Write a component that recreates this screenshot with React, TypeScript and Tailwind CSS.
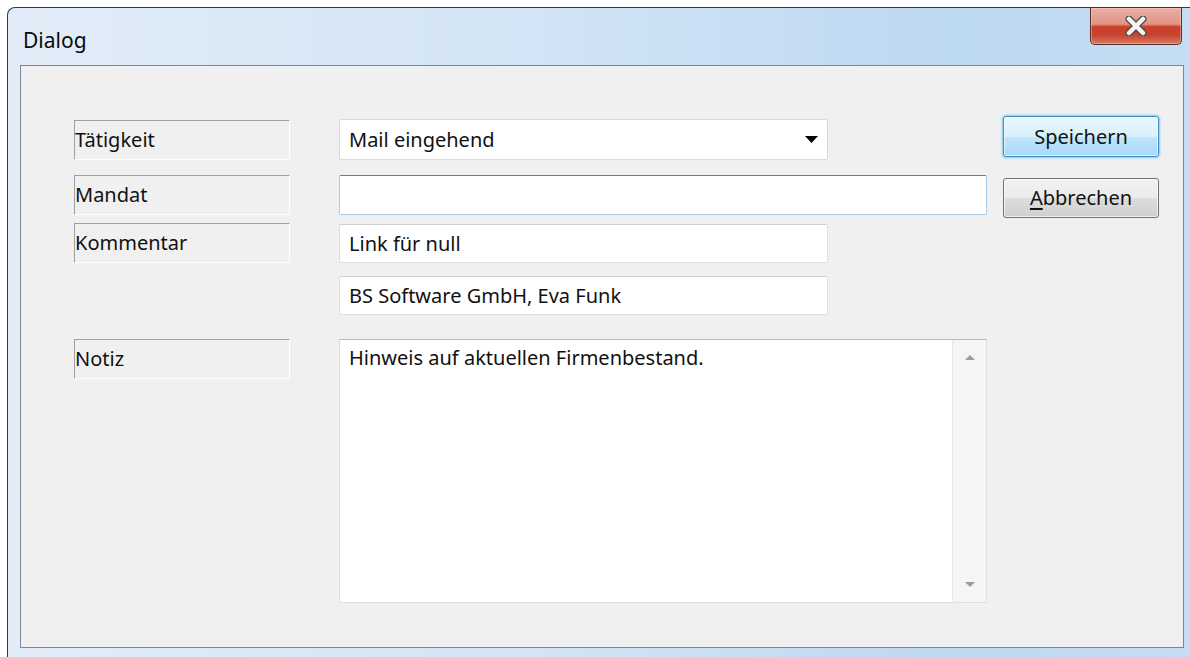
import { useState } from "react";

// Win7-style "Dialog" window: Aero frame, sunken labels, fields and two buttons

const FONT = { fontFamily: '"Noto Sans", "Open Sans", sans-serif' };

function FieldLabel({ text }: { text: string }) {
  return (
    <div className="flex h-[40px] w-[216px] shrink-0 items-center border-t border-l border-t-[#a0a0a0] border-l-[#a0a0a0] border-b border-r border-b-white border-r-white text-[20px] text-[#111]">
      {text}
    </div>
  );
}

function TextField({
  value,
  onChange,
  focused = false,
  width,
  height = "h-[39px]",
}: {
  value: string;
  onChange: (v: string) => void;
  focused?: boolean;
  width: string;
  height?: string;
}) {
  return (
    <input
      type="text"
      value={value}
      onChange={(e) => onChange(e.target.value)}
      style={FONT}
      className={`${width} ${height} rounded-[2px] border bg-white px-[9px] text-[20px] text-[#111] outline-none ${
        focused
          ? "border-[#a9cbe6] border-t-[#4a87bf]"
          : "border-[#dedede] border-t-[#d0d0d0]"
      }`}
    />
  );
}

function CloseButton() {
  return (
    <button className="flex h-[37px] w-[92px] items-center justify-center rounded-b-[5px] border border-t-0 border-[#5b2c28] bg-[linear-gradient(to_bottom,#ebb0a6_0%,#e19383_45%,#cb3f2a_52%,#c6432e_75%,#d77a66_100%)] shadow-[inset_0_0_0_1px_rgba(255,210,200,0.45)]">
      <svg width="30" height="20" viewBox="0 0 30 20">
        <path d="M8 3 L22 17 M22 3 L8 17" stroke="#4b4b4b" strokeWidth="7" strokeLinecap="round" />
        <path d="M8 3 L22 17 M22 3 L8 17" stroke="#f4f4f4" strokeWidth="4.5" strokeLinecap="round" />
      </svg>
    </button>
  );
}

function ScrollArrow({ up }: { up: boolean }) {
  return (
    <svg width="12" height="7" viewBox="0 0 12 7">
      <path d={up ? "M1 6 L6 1 L11 6 Z" : "M1 1 L6 6 L11 1 Z"} fill="#9c9c9c" />
    </svg>
  );
}

export default function App() {
  const [mandat, setMandat] = useState("");
  const [kommentar, setKommentar] = useState("Link für null");
  const [kontakt, setKontakt] = useState("BS Software GmbH, Eva Funk");
  const [notiz, setNotiz] = useState("Hinweis auf aktuellen Firmenbestand.");

  return (
    <div className="h-[657px] w-[1190px] overflow-hidden bg-white pl-[7px] pt-[7px]" style={FONT}>
      <div className="h-[660px] w-[1190px] rounded-tl-[8px] border-t border-l border-[#2f3b48] bg-[linear-gradient(to_right,#e2edf8_0%,#d2e4f5_45%,#bdd8f1_80%,#c6def3_100%)]">
        {/* Title bar */}
        <div className="flex h-[57px] items-start pl-[15px] pr-[15px]">
          <span className="mt-[19px] text-[21px] leading-[26px] text-[#0a0a0a]">Dialog</span>
          <div className="ml-auto">
            <CloseButton />
          </div>
        </div>

        {/* Client area */}
        <div className="ml-[12px] h-[583px] w-[1164px] border border-[#7b8794] bg-[#f0f0f0] pl-[53px] pt-[50px]">
          <div className="flex">
            {/* Fields */}
            <div className="mt-[3px] flex w-[913px] flex-col">
              <div className="flex items-center gap-[49px]">
                <FieldLabel text="Tätigkeit" />
                <div className="flex h-[41px] w-[489px] items-center justify-between rounded-[2px] border border-[#dadada] bg-white pl-[9px] pr-[9px] text-[20px] text-[#111]">
                  <span>Mail eingehend</span>
                  <svg width="13" height="7" viewBox="0 0 13 7">
                    <path d="M0 0 H13 L6.5 7 Z" fill="#000" />
                  </svg>
                </div>
              </div>

              <div className="mt-[15px] flex items-center gap-[49px]">
                <FieldLabel text="Mandat" />
                <TextField value={mandat} onChange={setMandat} focused width="w-[648px]" height="h-[40px]" />
              </div>

              <div className="mt-[8px] flex items-center gap-[49px]">
                <FieldLabel text="Kommentar" />
                <TextField value={kommentar} onChange={setKommentar} width="w-[489px]" />
              </div>

              <div className="mt-[13px] flex items-center gap-[49px]">
                <div className="w-[216px] shrink-0" />
                <TextField value={kontakt} onChange={setKontakt} width="w-[489px]" />
              </div>

              <div className="mt-[24px] flex items-start gap-[49px]">
                <FieldLabel text="Notiz" />
                <div className="flex h-[264px] w-[648px] border border-[#e0e0e0] border-t-[#b9b9b9] bg-white">
                  <textarea
                    value={notiz}
                    onChange={(e) => setNotiz(e.target.value)}
                    style={FONT}
                    className="flex-1 resize-none overflow-hidden px-[9px] pt-[5px] text-[20px] leading-[26px] text-[#111] outline-none"
                  />
                  <div className="flex w-[34px] flex-col items-center justify-between border-l border-[#e9e9e9] bg-[#f5f5f5] py-[14px]">
                    <ScrollArrow up />
                    <ScrollArrow up={false} />
                  </div>
                </div>
              </div>
            </div>

            {/* Buttons */}
            <div className="ml-[16px] flex flex-col">
              <button className="h-[41px] w-[156px] rounded-[3px] border border-[#3c8fcf] bg-[linear-gradient(to_bottom,#eaf6fd_0%,#d9f0fc_50%,#bee6fd_51%,#a7d9f5_100%)] text-[20px] text-[#111] shadow-[0_0_2px_1px_rgba(80,190,245,0.7),inset_0_0_0_1px_rgba(255,255,255,0.6)]">
                Speichern
              </button>
              <button className="mt-[21px] h-[40px] w-[156px] rounded-[3px] border border-[#707070] bg-[linear-gradient(to_bottom,#f2f2f2_0%,#ebebeb_50%,#dddddd_51%,#cfcfcf_100%)] text-[20px] text-[#111] shadow-[inset_0_0_0_1px_rgba(255,255,255,0.7)]">
                <span className="underline underline-offset-[3px]">A</span>bbrechen
              </button>
            </div>
          </div>
        </div>
      </div>
    </div>
  );
}
